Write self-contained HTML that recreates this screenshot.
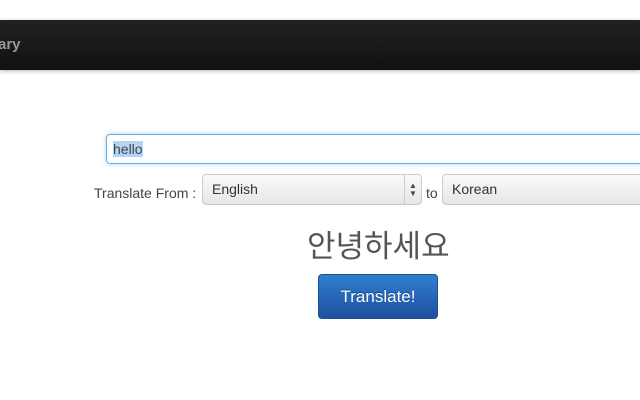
<!DOCTYPE html>
<html><head><meta charset="utf-8"><style>
body{margin:0;width:640px;height:400px;background:#fff;position:relative;overflow:hidden;font-family:"Liberation Sans","Noto Sans CJK KR",sans-serif}
.nav{position:absolute;left:0;top:20px;width:640px;height:50px;background:linear-gradient(#222,#111);box-shadow:0 1px 4px rgba(0,0,0,.3)}
.nav span{position:absolute;left:-2px;top:16px;color:#999;font-weight:bold;font-size:15px}
.inp{position:absolute;left:106px;top:134px;width:560px;height:28px;border:1px solid #6aaee8;border-radius:4px;box-shadow:0 0 5px rgba(82,168,236,.5)}
.inp span{position:absolute;left:6px;top:6px;font-size:14px;color:#444;background:#b4d5f5;line-height:16px}
.lbl{position:absolute;font-size:14px;color:#444}
.sel{position:absolute;top:174px;height:29px;border:1px solid #ccc;border-radius:4px;background:linear-gradient(#fafafa,#e6e6e6);font-size:14px;color:#333}
.sel span{position:absolute;left:9px;top:6px}
.arr{position:absolute;right:0;top:0;width:17px;height:29px;border-left:1px solid #ccc;font-size:8px;color:#444;text-align:center;line-height:8px;padding-top:7px;box-sizing:border-box}
.ko{position:absolute;left:307px;top:221px;font-size:31px;color:#555}
.btn{position:absolute;left:318px;top:274px;width:118px;height:43px;border:1px solid #1d4f96;border-radius:4px;background:linear-gradient(#2f7fd0,#1f4fa0);color:#fff;font-size:17px;text-align:center;line-height:43px;text-shadow:0 -1px 0 rgba(0,0,0,.3)}
</style></head><body>
<div class="nav"><span>ary</span></div>
<div class="inp"><span>hello</span></div>
<div class="lbl" style="left:94px;top:185px">Translate From :</div>
<div class="sel" style="left:202px;width:218px"><span>English</span><div class="arr">▲<br>▼</div></div>
<div class="lbl" style="left:426px;top:185px">to</div>
<div class="sel" style="left:442px;width:220px"><span>Korean</span></div>
<div class="ko">안녕하세요</div>
<div class="btn">Translate!</div>
</body></html>
